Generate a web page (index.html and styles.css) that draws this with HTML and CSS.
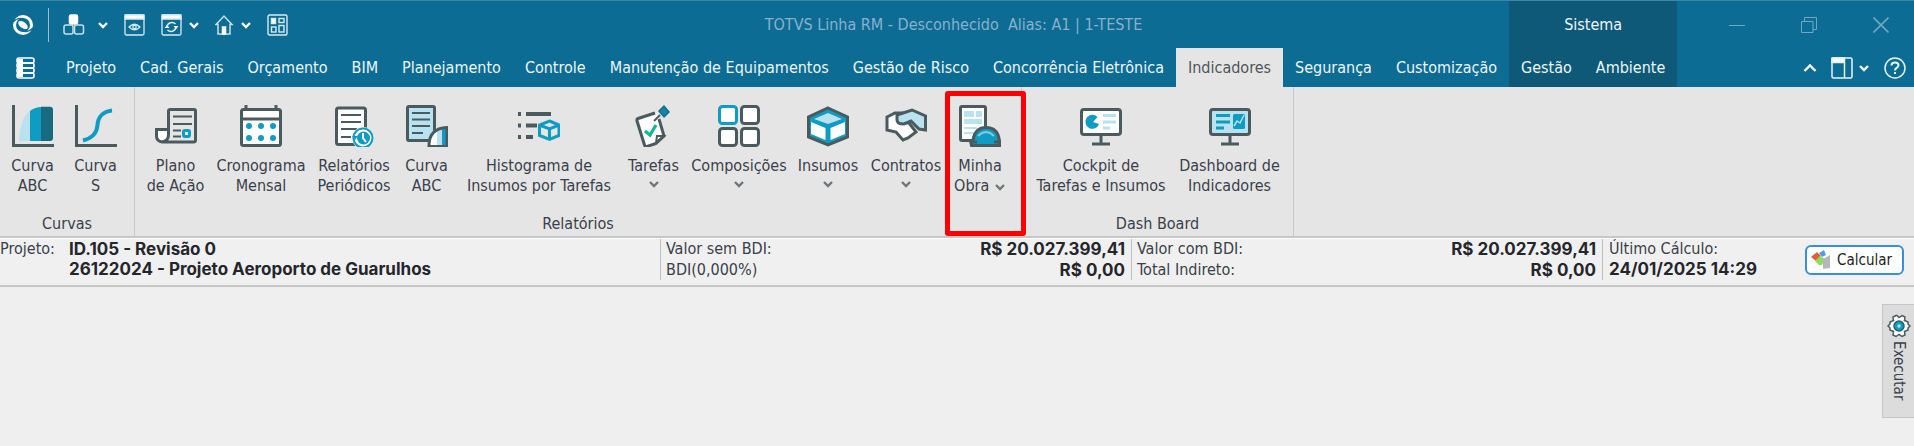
FILE: index.html
```
<!DOCTYPE html>
<html lang="pt-BR">
<head>
  <meta charset="UTF-8">
  <title>TOTVS Linha RM</title>
  <link rel="stylesheet" href="styles.css">
</head>
<body>
  <svg class="defs" aria-hidden="true">
    <symbol id="chevron" viewBox="0 0 12 8"><path d="M2 2L6 6L10 2" fill="none" stroke="currentColor" stroke-width="2.4"/></symbol>
  </svg>

  <header class="header">
    <div class="header-main">
      <div class="title-row">
        <div class="quick">
          <button class="logo" aria-label="Menu">
            <svg width="22" height="22" viewBox="0 0 22 22"><circle cx="11" cy="11" r="8.500" fill="none" stroke="#fff" stroke-width="3"/><ellipse cx="11" cy="11" rx="5.500" ry="3" transform="rotate(35 11 11)" fill="#fff"/><path d="M1 8Q6 3 12 5M21 14Q16 19 10 17" fill="none" stroke="#0c6c94" stroke-width="1.200"/></svg>
          </button>
          <button class="split modules" aria-label="Módulos">
            <svg width="22" height="22" viewBox="0 0 22 22" fill="none" stroke="#c7e0ea" stroke-width="1.5"><rect x="6.500" y="1" width="8" height="9" rx="1.500" fill="#fff" stroke="#fff"/><rect x="1" y="11" width="9" height="9" rx="2"/><rect x="11.500" y="11" width="9" height="9" rx="2"/></svg>
            <svg class="chev"><use href="#chevron"/></svg>
          </button>
          <button aria-label="Visualizar">
            <svg width="22" height="22" viewBox="0 0 22 22" fill="none" stroke="#d8eaf1" stroke-width="1.3"><rect x="1" y="1" width="19" height="20" rx="1.500"/><path d="M1 1H20V5H1Z" fill="#fff"/><path d="M5 13Q10.500 7.500 16 13Q10.500 18.500 5 13Z"/><circle cx="10.500" cy="13" r="1.700"/></svg>
          </button>
          <button class="split" aria-label="Atualizar">
            <svg width="22" height="22" viewBox="0 0 22 22" fill="none" stroke="#d8eaf1" stroke-width="1.3"><rect x="1" y="1" width="19" height="20" rx="1.500"/><path d="M1 1H20V5H1Z" fill="#fff"/><path d="M6 13A5 5 0 0 1 14.500 10M15 13A5 5 0 0 1 6.500 16" stroke-width="1.600"/><path d="M12.500 12H17.500L15 15ZM3.500 14H8.500L6 11Z" fill="#fff" stroke="none"/></svg>
            <svg class="chev"><use href="#chevron"/></svg>
          </button>
          <button class="split" aria-label="Início">
            <svg width="20" height="22" viewBox="0 0 20 22" fill="none" stroke="#c7e0ea" stroke-width="1.5"><path d="M1 10.500L9 2L17 10.500H15V20H3V10.500Z"/><path d="M7.500 13H10.500V20H7.500Z" fill="#fff" stroke="#fff"/></svg>
            <svg class="chev"><use href="#chevron"/></svg>
          </button>
          <button aria-label="Painéis">
            <svg width="22" height="22" viewBox="0 0 22 22" fill="none" stroke="#d8eaf1" stroke-width="1.4"><rect x="1" y="1" width="19" height="20" rx="1.500"/><rect x="4.500" y="4.500" width="4" height="5" fill="#fff"/><rect x="12" y="4.500" width="5" height="4"/><rect x="4.500" y="13" width="4.500" height="5"/><rect x="12" y="11.500" width="5" height="6.500"/></svg>
          </button>
        </div>
        <h1 class="title">TOTVS Linha RM - Desconhecido&nbsp; Alias: A1 | 1-TESTE</h1>
      </div>
      <nav class="tabs">
        <button class="stack" aria-label="Arquivo">
          <svg width="20" height="22" viewBox="0 0 20 22" fill="none" stroke="#fff" stroke-width="1.6"><rect x="1" y="1" width="17" height="5" rx="2"/><rect x="1" y="6" width="17" height="5" rx="2"/><rect x="1" y="11" width="17" height="5" rx="2"/><rect x="1" y="16" width="17" height="5" rx="2"/><path d="M2 2H7V20H2Z" fill="#fff" stroke="none"/></svg>
        </button>
        <a href="#">Projeto</a>
        <a href="#">Cad. Gerais</a>
        <a href="#">Orçamento</a>
        <a href="#">BIM</a>
        <a href="#">Planejamento</a>
        <a href="#">Controle</a>
        <a href="#">Manutenção de Equipamentos</a>
        <a href="#">Gestão de Risco</a>
        <a href="#">Concorrência Eletrônica</a>
        <a href="#" class="active">Indicadores</a>
        <a href="#">Segurança</a>
        <a href="#">Customização</a>
      </nav>
    </div>
    <div class="context">
      <div class="context-title">Sistema</div>
      <nav class="context-tabs">
        <a href="#">Gestão</a>
        <a href="#">Ambiente</a>
      </nav>
    </div>
    <div class="window-tools">
      <div class="window-buttons">
        <button aria-label="Minimizar"><svg width="16" height="16" viewBox="0 0 16 16"><path d="M0 8.500H16"/></svg></button>
        <button aria-label="Restaurar"><svg width="16" height="16" viewBox="0 0 16 16"><path d="M.5 4.500H12V15.500H.5ZM3.500 4.500V.5H15.500V12.500H12"/></svg></button>
        <button aria-label="Fechar"><svg width="16" height="16" viewBox="0 0 16 16"><path d="M.5 .5L15.500 15.500M15.500 .5L.5 15.500" stroke-width="1.600"/></svg></button>
      </div>
      <div class="ribbon-buttons">
        <button aria-label="Recolher"><svg width="14" height="22" viewBox="0 0 14 22"><path d="M1.500 14L7 8.500L12.500 14" fill="none" stroke="#fff" stroke-width="2.400"/></svg></button>
        <button class="split" aria-label="Layout">
          <svg width="22" height="22" viewBox="0 0 22 22" fill="none" stroke="#e8f3f7" stroke-width="1.500"><rect x="1" y="1" width="20" height="20" rx="1.500"/><path d="M13.500 1V21"/><path d="M1 1H13V5.500H1Z" fill="#fff"/></svg>
          <svg class="chev"><use href="#chevron"/></svg>
        </button>
        <button aria-label="Ajuda"><svg width="22" height="22" viewBox="0 0 22 22" fill="none" stroke="#e8f3f7"><circle cx="11" cy="11" r="10" stroke-width="1.500"/><path d="M7.500 8.500Q7.500 5.500 11 5.500Q14.500 5.500 14.500 8.300Q14.500 10 12.500 11Q11 11.800 11 13.500M11 15V17" stroke-width="2"/></svg></button>
      </div>
    </div>
  </header>

  <section class="ribbon">
    <div class="group">
      <div class="tools curvas">
        <button class="tool">
          <svg class="icon" viewBox="0 0 42 42"><path d="M1.500 0V40.500H42" class="line"/><path d="M18 6Q8 13 7 36H18Z" fill="#b8e2ef"/><path d="M18 6Q23 2 29.500 2V36H18Z" fill="#0f9cc3"/><path d="M29 1.700H38Q41 1.700 41 5V33Q41 36 38 36H29Z" fill="#176a80"/></svg>
          <span>Curva<br>ABC</span>
        </button>
        <button class="tool">
          <svg class="icon" viewBox="0 0 42 42"><path d="M1.500 0V40.500H42" class="line"/><path d="M8 35.500C18 33 22 28 22.500 20C23 12 28 6.500 37 5.500" fill="none" stroke="#0f9cc3" stroke-width="4"/></svg>
          <span>Curva<br>S</span>
        </button>
      </div>
      <div class="group-name">Curvas</div>
    </div>

    <div class="group">
      <div class="tools relatorios">
        <button class="tool">
          <svg class="icon" viewBox="0 0 42 42"><path d="M2.500 25H12V31Q12 35.500 7.500 36Q2.500 35.500 2.500 31Z" fill="#fff"/><path d="M13.500 30V6Q13.500 4.500 15.500 4.500H39Q40.500 4.500 40.500 6V35Q40.500 37 38.500 37H7Q1.500 36 1.500 31V24.500H13.500M13.500 30Q13.500 36 7 37" class="line"/><path d="M18 11.500H37M18 19H37M18 25.500H26M18 31.500H26" class="line thin"/><rect x="28.500" y="25.500" width="6" height="6" rx="1.500" class="blue"/></svg>
          <span>Plano<br>de Ação</span>
        </button>
        <button class="tool">
          <svg class="icon" viewBox="0 0 42 42"><path d="M6 0V5M36 0V5" class="line"/><rect x="1.500" y="4.500" width="39" height="36" rx="2" fill="#fff" class="line"/><path d="M1.500 14H40.500" class="line"/><g fill="#0f9cc3"><circle cx="9" cy="21" r="3"/><circle cx="21" cy="21" r="3"/><circle cx="33" cy="21" r="3"/><circle cx="9" cy="33" r="3"/><circle cx="21" cy="33" r="3"/><circle cx="33" cy="33" r="3"/></g></svg>
          <span>Cronograma<br>Mensal</span>
        </button>
        <button class="tool">
          <svg class="icon" viewBox="0 0 42 42"><rect x="3.500" y="3" width="29" height="36.500" rx="2" fill="#fff" class="line"/><path d="M8 10H28M8 17H28M8 24H24M8 32H18" class="line thin"/><circle cx="30" cy="33" r="11" fill="#e5e5e5"/><circle cx="30" cy="33" r="9.500" fill="#fff" stroke="#0f9cc3" stroke-width="2"/><circle cx="30.500" cy="33" r="6.500" fill="#0f9cc3"/><path d="M30 28V33L33 37" fill="none" stroke="#fff" stroke-width="2"/><path d="M19 31H25L22 35Z" fill="#0f9cc3"/></svg>
          <span>Relatórios<br>Periódicos</span>
        </button>
        <button class="tool">
          <svg class="icon" viewBox="0 0 42 42"><rect x="1.500" y="1.500" width="27" height="34" rx="1.500" fill="#b8e2ef" class="line"/><path d="M6 8H24M6 14.500H24M6 21H24M6 28H17" class="line thin"/><path d="M23 42Q22 23 42 22V42Z" fill="#fff"/><path d="M31 24.500L36 23V41H31Z" fill="#b8e2ef"/><path d="M36 23H41V41H36Z" fill="#0f9cc3"/><path d="M23 41.500Q22.500 23.500 41 22.500V41.500Z" class="line"/></svg>
          <span>Curva<br>ABC</span>
        </button>
        <button class="tool">
          <svg class="icon" viewBox="0 0 42 42"><path d="M8 9H33M8 20.500H19M8 32H15M0 9H3M0 20.500H3M0 32H3" class="line wide"/><path d="M31.500 16L41 20V30.500L31.500 34.500L21.500 30.500V20ZM21.500 20L31.500 24L41 20M31.500 24V34" class="blue"/></svg>
          <span>Histograma de<br>Insumos por Tarefas</span>
        </button>
        <button class="tool">
          <svg class="icon" viewBox="0 0 42 42"><path d="M6 15L24 8L31 31L24 38L13 41.500L11 40Z" fill="#fff"/><path d="M22 8L5 13.500Q3.500 14 4 16L11.500 40Q12 42 14 41.500L23 38.500L31 31L26 14" class="line"/><path d="M23 38L24 31L31 31Z" class="line thin" fill="#176a80"/><path d="M12 26L17 30L23 20" fill="none" stroke="#12b893" stroke-width="3.200"/><path d="M21 16L27 10" class="line thin"/><path d="M25 6L31 0L37 7L31 13Z" fill="#176a80"/><path d="M27 6L31 2L35 7L31 11Z" fill="#0f86ac"/></svg>
          <span>Tarefas</span>
          <svg class="chev"><use href="#chevron"/></svg>
        </button>
        <button class="tool">
          <svg class="icon" viewBox="0 0 42 42"><rect x="1.500" y="1.500" width="17" height="17" rx="3" fill="#fff" class="blue"/><rect x="23.500" y="1.500" width="17" height="17" rx="3" fill="#fff" class="line"/><rect x="1.500" y="23.500" width="17" height="17" rx="3" fill="#fff" class="line"/><rect x="23.500" y="23.500" width="17" height="17" rx="3" fill="#fff" class="line"/></svg>
          <span>Composições</span>
          <svg class="chev"><use href="#chevron"/></svg>
        </button>
        <button class="tool">
          <svg class="icon" viewBox="0 0 42 42"><path d="M21 3L40.500 12V32L21 40L1.500 32V12Z" fill="#0f9cc3" class="line"/><path d="M21 8L35 14L21 19L7 14Z" fill="#b8e2ef"/><path d="M4 17L18.500 23V35L4 29ZM38 17L23.500 23V35L38 29Z" fill="#fff"/></svg>
          <span>Insumos</span>
          <svg class="chev"><use href="#chevron"/></svg>
        </button>
        <button class="tool">
          <svg class="icon" viewBox="0 0 42 42"><path d="M2 12L10 8L17 8L14 11V17L24 18L31 27L23 33L18 35L11 27L2 25Z" fill="#fff" class="line"/><path d="M12 10L27 5L40.500 11V25L34 24L26 16L19 19Q12 19 12 15Z" fill="#b8e2ef" class="line"/></svg>
          <span>Contratos</span>
          <svg class="chev"><use href="#chevron"/></svg>
        </button>
        <button class="tool marked">
          <svg class="icon" viewBox="0 0 42 42"><rect x="1.500" y="1.500" width="25" height="34" rx="1.500" fill="#fff" class="line"/><path d="M5 6H15V12H5ZM17 6H23V12H17ZM5 14H23V19H5ZM5 22H18V24H5ZM5 27H15V29H5Z" fill="#b8e2ef"/><path d="M12.500 40.500L11.500 36L14 35Q16 22.500 27 22.500Q39 22.500 40.500 36V40.500Z" fill="#0f9cc3" class="line"/><path d="M12 37H18M35 37H40" class="line"/><path d="M19 31Q27 23 35 31" fill="none" stroke="#7fcbe0" stroke-width="2"/></svg>
          <span>Minha<br>Obra <svg class="chev"><use href="#chevron"/></svg></span>
        </button>
      </div>
      <div class="group-name">Relatórios</div>
    </div>

    <div class="group">
      <div class="tools dash">
        <button class="tool">
          <svg class="icon" viewBox="0 0 42 42"><rect x="1.500" y="4.500" width="39" height="25" rx="2.500" fill="#fff" class="line"/><path d="M21 30V38M12 39H30" class="line"/><path d="M13 17L17.500 12A7 7 0 1 0 19 19Z" fill="#0f9cc3"/><path d="M23 10.500H36M23 17H36M23 23H30" stroke="#b8e2ef" stroke-width="3"/></svg>
          <span>Cockpit de<br>Tarefas e Insumos</span>
        </button>
        <button class="tool">
          <svg class="icon" viewBox="0 0 42 42"><rect x="1.500" y="4.500" width="39" height="25" rx="2.500" fill="#b8e2ef" class="line"/><path d="M21 30V38M12 39H30" class="line"/><path d="M7 10.500H21M7 17H21M7 23H15" stroke="#0f9cc3" stroke-width="3"/><rect x="24" y="9" width="12" height="15" rx="1.500" fill="#0f9cc3"/><path d="M25 21L28 16L31 18L35 10" fill="none" stroke="#b8e2ef" stroke-width="1.500"/></svg>
          <span>Dashboard de<br>Indicadores</span>
        </button>
      </div>
      <div class="group-name">Dash Board</div>
    </div>
  </section>

  <section class="info">
    <div class="project">
      <span>Projeto:</span>
      <strong>ID.105 - Revisão 0<br>26122024 - Projeto Aeroporto de Guarulhos</strong>
    </div>
    <dl class="values">
      <dt>Valor sem BDI:</dt><dd>R$ 20.027.399,41</dd>
      <dt>BDI(0,000%)</dt><dd>R$ 0,00</dd>
    </dl>
    <dl class="values">
      <dt>Valor com BDI:</dt><dd>R$ 20.027.399,41</dd>
      <dt>Total Indireto:</dt><dd>R$ 0,00</dd>
    </dl>
    <div class="last">
      <div>Último Cálculo:<br><strong>24/01/2025 14:29</strong></div>
      <button class="calc">
        <svg width="20" height="20" viewBox="0 0 20 20"><path d="M0 7L6 2L10 6L5 11Z" fill="#e0603c"/><path d="M8 3L13 0L15 5L11 7Z" fill="#5a9be8"/><path d="M4 11L9 6L14 9L11 15L8 15Z" fill="#8fdc5c"/><path d="M12 9L19 5V18L12 19Z" fill="#b4b8bc"/></svg>
        Calcular
      </button>
    </div>
  </section>

  <main class="workspace">
    <button class="dock">
      <svg width="24" height="24" viewBox="0 0 24 24"><path d="M10 1.500L12 3.500L15 1.500L18 3L17.500 6.500L21 8V10L23 12L21 14V16L17.500 17.500L18 21L15 22.500L12 20.500L9 22.500L6 21L6.500 17.500L3 16V14L1 12L3 10V8L6.500 6.500L6 3L9 1.500Z" fill="#fff" stroke="#4a5b60" stroke-width="1.500"/><circle cx="12" cy="12" r="5" fill="#0f9cc3" stroke="#2a6070" stroke-width="1.500"/><circle cx="12" cy="12" r="1.800" fill="#a8e4f2"/></svg>
      <span>Executar</span>
    </button>
  </main>
</body>
</html>
```
FILE: styles.css
```
*, ::after {margin: 0; padding: 0; box-sizing: border-box;}
body {background-color: #efefef; color: #3a3f4b; font-family: 'DejaVu Sans Condensed', Tahoma, 'Noto Sans', sans-serif; font-size: 16px; line-height: 20px;}
button {background: none; border: none; color: inherit; font: inherit; cursor: pointer;}
a {color: inherit; text-decoration: none;}
svg {display: block; flex: none;}
.defs {display: none;}
.chev {width: 12px; height: 8px;}

.header {background-color: #0c6c94; color: #eef6f9; border-top: 1px solid #3d87a5; display: flex;}
.title-row {height: 47px; display: flex; align-items: center;}
.quick {width: 398px; display: flex; align-items: center; gap: 15px; color: #fff;}
.split {display: flex; align-items: center; gap: 5px;}
.modules {gap: 12px; margin-left: -1px;}
.logo {padding: 6px 14px 6px 12px; border-right: 1px solid #9dc0cf;}
.title {flex: 1; text-align: center; color: #8ab0cc; font-size: 16px; font-weight: normal;}
.tabs, .context-tabs {height: 39px; display: flex; line-height: 39px;}
.tabs a, .context-tabs a {padding: 0 12px; white-space: nowrap;}
.stack {width: 54px; padding-left: 16px;}
.tabs .active {background-color: #e5e5e5; color: #50545c;}
.context {background-color: #0d5977;}
.context-title {height: 47px; line-height: 47px; text-align: center;}
.window-tools {flex: 1; display: flex; flex-direction: column; align-items: flex-end;}
.window-buttons {height: 47px; padding-right: 25px; display: flex; align-items: center; gap: 56px;}
.window-buttons svg {fill: none; stroke: #6fa9c0; stroke-width: 1;}
.ribbon-buttons {height: 39px; padding-right: 8px; display: flex; align-items: center; gap: 14px;}

.ribbon {background-color: #e5e5e5; border-bottom: 2px solid #c6c6c6; display: flex;}
.group {border-right: 1px solid #c9c9c9;}
.tools {display: grid; height: 131px;}
.curvas {grid-template-columns: 63px 63px; padding: 0 7px 0 1px;}
.relatorios {grid-template-columns: 71px 100px 86px 59px 166px 63px 108px 70px 86px 62px; padding: 0 10px 0 5px;}
.dash {grid-template-columns: 144px 113px; padding: 0 7px;}
.tool {display: flex; flex-direction: column; align-items: center; padding-top: 18px; white-space: nowrap; position: relative;}
.tool .icon {width: 42px; height: 42px; margin-bottom: 9px;}
.tool .chev {color: #70757a; margin-top: 4px;}
.tool span .chev {display: inline-block; margin: 0; vertical-align: middle;}
.icon .line {fill: none; stroke: #4a5b60; stroke-width: 3;}
.icon .blue {fill: none; stroke: #0f9cc3; stroke-width: 3;}
.icon .thin {stroke-width: 2;}
.icon .wide {stroke-width: 4;}
.icon [fill="#fff"] {fill: #fff;}
.icon [fill="#b8e2ef"] {fill: #b8e2ef;}
.icon [fill="#0f9cc3"] {fill: #0f9cc3;}
.marked::after {content: ""; position: absolute; top: 4px; left: -4px; width: 81px; height: 145px; border: 5px solid #f00; border-radius: 3px; z-index: 1;}
.group-name {text-align: center; height: 18px; line-height: 11px;}

.info {background-color: #f0f0f0; border-top: 1px solid #fff; border-bottom: 2px solid #c6c6c6; display: grid; grid-template-columns: 660fr 471fr 471fr 312fr; padding: 0 0 5px;}
.info strong, .values dd {font-family: Inter, Roboto, sans-serif; font-size: 17px; font-weight: 700; color: #25262c;}
.project {display: flex; gap: 12px;}
.project span {width: 57px;}
.values {display: grid; grid-template-columns: auto 1fr; border-left: 1px solid #c0c0c0; padding: 0 6px 0 5px;}
.values dd {text-align: right;}
.last {display: flex; justify-content: space-between; align-items: center; border-left: 1px solid #c0c0c0; padding: 0 10px 0 6px;}
.calc {display: flex; align-items: center; gap: 6px; height: 30px; padding: 0 10px 0 4px; background-color: #fff; border: 2px solid #3a8fdc; border-radius: 6px; color: #222; font-size: 15px;}

.workspace {display: flex; justify-content: flex-end; padding-top: 17px;}
.dock {width: 32px; height: 114px; background-color: #dcdcdc; border: 1px solid #c6c6c6; border-right: none; display: flex; flex-direction: column; align-items: center; padding-top: 9px; gap: 3px; font-size: 15px;}
.dock span {writing-mode: vertical-rl;}
```
